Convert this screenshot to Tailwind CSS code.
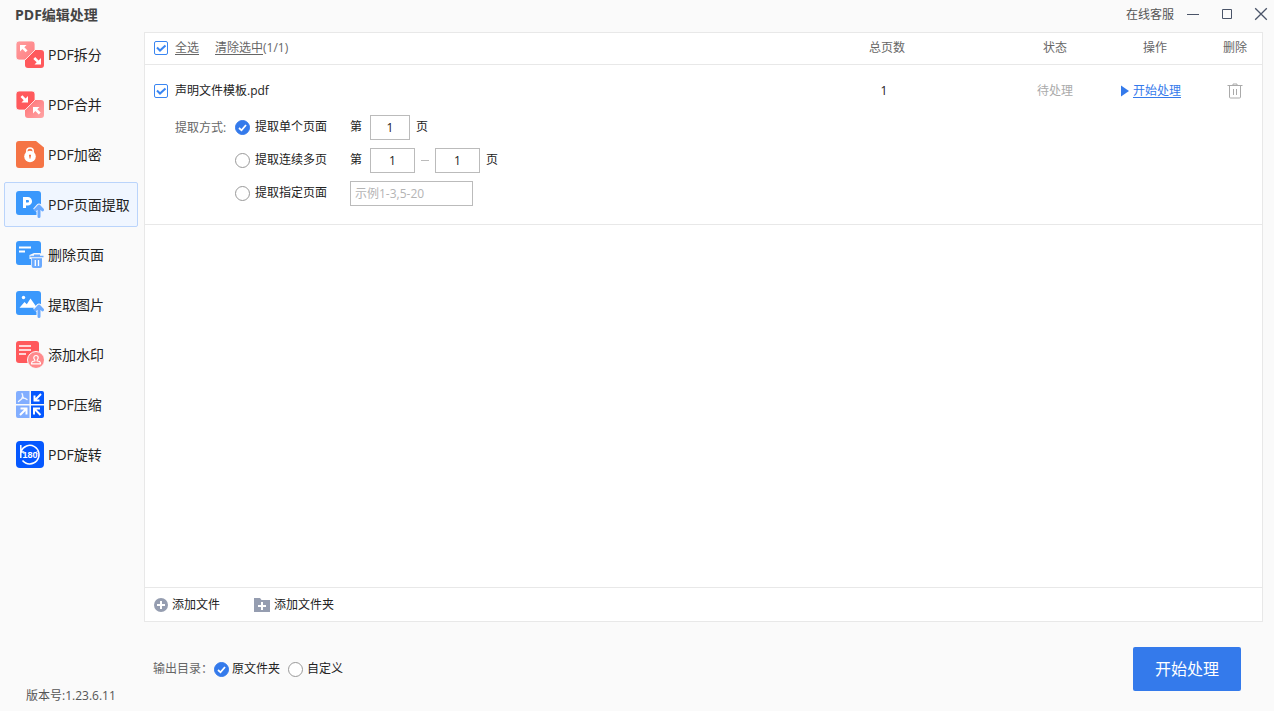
<!DOCTYPE html>
<html lang="zh-CN">
<head>
<meta charset="utf-8">
<title>PDF编辑处理</title>
<meta name="viewport" content="width=device-width, initial-scale=1">
<script src="https://cdn.jsdelivr.net/npm/@tailwindcss/browser@4"></script>
</head>
<body class="flex h-screen flex-col bg-[#fafafa] font-['Open_Sans','Noto_Sans_CJK_SC',sans-serif] text-xs text-[#333]">

<header class="flex h-8 shrink-0 items-start justify-between pt-1 pl-[15px] pr-1.5">
  <h1 class="text-sm leading-[22px] font-bold text-[#444]">PDF编辑处理</h1>
  <div class="flex h-5 items-center">
    <a href="#" class="mr-3 leading-5 pt-0.5 text-[#555]">在线客服</a>
    <button type="button" aria-label="最小化" class="mr-5"><svg class="size-3.5" viewBox="0 0 14 14" fill="none" stroke="#4a5468"><path d="M1 7.500h12"/></svg></button>
    <button type="button" aria-label="最大化" class="mr-5"><svg class="size-3.5" viewBox="0 0 14 14" fill="none" stroke="#4a5468"><path d="M2.500 2.500h9v9h-9z"/></svg></button>
    <button type="button" aria-label="关闭"><svg class="size-3.5" viewBox="0 0 14 14" fill="none" stroke="#4a5468" stroke-width="1.300"><path d="M1.200 1.200l11.600 11.600M12.800 1.200L1.200 12.800"/></svg></button>
  </div>
</header>

<div class="flex min-h-0 flex-1">
  <aside class="flex w-36 shrink-0 flex-col justify-between">
    <nav class="flex flex-col gap-[5px] pl-1 pr-1.5 text-sm text-[#222]">
      <a href="#" class="flex h-[45px] items-center gap-1 rounded-xs border border-transparent pl-[11px] whitespace-nowrap">
        <svg class="size-7 shrink-0" viewBox="0 0 28 28"><defs><linearGradient id="pale" x1="0" y1="0" x2="1" y2="1"><stop offset="0" stop-color="#ff9a9c"/><stop offset="1" stop-color="#ff8083"/></linearGradient></defs><path fill="#ff595c" d="M19 9h6a3 3 0 0 1 3 3v12a3 3 0 0 1-3 3H12a3 3 0 0 1-3-3v-5z"/><path fill="url(#pale)" stroke="#fafafa" stroke-width=".8" d="M3 0h13a3 3 0 0 1 3 3v6L9 19H3a3 3 0 0 1-3-3V3a3 3 0 0 1 3-3z"/><path fill="#fff" d="M4 4h6.500L8.300 6.200l3.200 3.200-1.900 1.900-3.200-3.200L4 10.500zM25 23.500h-6.500l2.200-2.200-3.400-3.400 1.900-1.900 3.400 3.400L25 17z"/></svg>
        PDF拆分</a>
      <a href="#" class="flex h-[45px] items-center gap-1 rounded-xs border border-transparent pl-[11px] whitespace-nowrap">
        <svg class="size-7 shrink-0" viewBox="0 0 28 28"><defs><linearGradient id="pale2" x1="0" y1="0" x2="1" y2="1"><stop offset="0" stop-color="#ff7073"/><stop offset="1" stop-color="#ffa5a6"/></linearGradient></defs><path fill="url(#pale2)" d="M19 9h6a3 3 0 0 1 3 3v12a3 3 0 0 1-3 3H12a3 3 0 0 1-3-3v-5z"/><path fill="#ff595c" stroke="#fafafa" stroke-width=".8" d="M3 0h13a3 3 0 0 1 3 3v6L9 19H3a3 3 0 0 1-3-3V3a3 3 0 0 1 3-3z"/><path fill="#fff" d="M12 11.500H5.500l2.200-2.200-3.200-3.200 1.900-1.900 3.200 3.200L12 5zM17 16h6.500l-2.200 2.200 3.400 3.400-1.900 1.900-3.400-3.400-2.400 2.400z"/></svg>
        PDF合并</a>
      <a href="#" class="flex h-[45px] items-center gap-1 rounded-xs border border-transparent pl-[11px] whitespace-nowrap">
        <svg class="size-7 shrink-0" viewBox="0 0 28 28"><path fill="#f57445" d="M3 0h17l8 6.500V24a3 3 0 0 1-3 3H3a3 3 0 0 1-3-3V3a3 3 0 0 1 3-3z"/><circle cx="14" cy="15.500" r="5.800" fill="#fff"/><path d="M10.800 12V9.800a3.200 2.800 0 0 1 6.400 0V12" fill="none" stroke="#fff" stroke-width="1.500"/><path fill="#f57445" d="M13 13.800h2v1.800h-.4v2h-1.200v-2H13z"/></svg>
        PDF加密</a>
      <a href="#" aria-current="page" class="flex h-[45px] items-center gap-1 rounded-xs border border-[#bad4fb] bg-[#f0f6ff] pl-[11px] whitespace-nowrap">
        <svg class="size-7 shrink-0" viewBox="0 0 28 28"><path fill="#3a98fc" d="M3 0h19a3 3 0 0 1 3 3v21H3a3 3 0 0 1-3-3V3a3 3 0 0 1 3-3z"/><path fill="none" stroke="#fff" stroke-width="3" d="M8.500 17V7.500h3.300a2.700 2.700 0 0 1 0 5.500H8.500"/><path fill="none" stroke="#f0f6ff" stroke-width="5" stroke-linejoin="round" d="M23 27V15l-4 4.500M23 15l4 4.500"/><path fill="none" stroke="#6aaaff" stroke-width="3" stroke-linejoin="round" stroke-linecap="round" d="M23 25.500V15l-3.500 3.800M23 15l3.500 3.800"/></svg>
        PDF页面提取</a>
      <a href="#" class="flex h-[45px] items-center gap-1 rounded-xs border border-transparent pl-[11px] whitespace-nowrap">
        <svg class="size-7 shrink-0" viewBox="0 0 28 28"><path fill="#3a98fc" d="M3 0h19a3 3 0 0 1 3 3v21H3a3 3 0 0 1-3-3V3a3 3 0 0 1 3-3z"/><path stroke="#fff" stroke-width="1.800" d="M3 6.500h12M3 10.500h6"/><path fill="#fafafa" d="M13.500 14l4.500-2h6l4 2v4h-1v10H15V18h-1.500z"/><path fill="#6aaaff" d="M14.300 14.700H18v-1.200h6v1.200h3.500v1.600H14.300zM15.700 17.200H26V25a2 2 0 0 1-2 2h-6.300a2 2 0 0 1-2-2z"/><path stroke="#fff" stroke-width="1.300" d="M19.300 19v6M22.500 19v6"/></svg>
        删除页面</a>
      <a href="#" class="flex h-[45px] items-center gap-1 rounded-xs border border-transparent pl-[11px] whitespace-nowrap">
        <svg class="size-7 shrink-0" viewBox="0 0 28 28"><path fill="#3a98fc" d="M3 0h19a3 3 0 0 1 3 3v21H3a3 3 0 0 1-3-3V3a3 3 0 0 1 3-3z"/><circle cx="7.500" cy="6.500" r="1.700" fill="#fff"/><path fill="#fff" d="M3.500 16.700l5-5.700 2.300 2.300L14.500 7.500l6.500 9.200z"/><path fill="none" stroke="#fafafa" stroke-width="5" stroke-linejoin="round" d="M23 27V15l-4 4.500M23 15l4 4.500"/><path fill="none" stroke="#6aaaff" stroke-width="3" stroke-linejoin="round" stroke-linecap="round" d="M23 25.500V15l-3.500 3.800M23 15l3.500 3.800"/></svg>
        提取图片</a>
      <a href="#" class="flex h-[45px] items-center gap-1 rounded-xs border border-transparent pl-[11px] whitespace-nowrap">
        <svg class="size-7 shrink-0" viewBox="0 0 28 28"><path fill="#ff595c" d="M3 0h17a3 3 0 0 1 3 3v19H3a3 3 0 0 1-3-3V3a3 3 0 0 1 3-3z"/><path stroke="#fff" stroke-width="1.500" d="M3 5h12M3 9h12M3 13h7"/><circle cx="20" cy="19" r="8.500" fill="#ff8a8c" stroke="#fafafa"/><path fill="none" stroke="#fff" stroke-width="1.200" stroke-linejoin="round" d="M18.900 20c.2-1.500-1.100-1.800-1.100-3.300a2.200 2.200 0 0 1 4.400 0c0 1.500-1.300 1.800-1.100 3.300 1.500 0 3.400.2 3.400 2.800h-9c0-2.600 1.900-2.800 3.400-2.800z"/></svg>
        添加水印</a>
      <a href="#" class="flex h-[45px] items-center gap-1 rounded-xs border border-transparent pl-[11px] whitespace-nowrap">
        <svg class="size-7 shrink-0" viewBox="0 0 28 28"><path fill="#82aeff" d="M2 0h11.500v13H0V2a2 2 0 0 1 2-2zM0 14.500h13.500V27H2a2 2 0 0 1-2-2z"/><path fill="#0558ff" d="M15 0h11a2 2 0 0 1 2 2v11H15zM15 14.500h13V25a2 2 0 0 1-2 2H15z"/><path fill="none" stroke="#f2f6ff" stroke-width="1.300" stroke-linecap="round" d="M6 2.500c1.200 2.200.8 3.800-.2 5.200L2.500 10.500M5.800 7.200c2-.2 3.800.2 5.200 1.300M6.800 5.500l1 1.700"/><path fill="none" stroke="#fff" stroke-width="2" d="M18.500 4.500v5h5M18.500 9.500l6.500-6.500M4.500 17.500h6v6M10.500 17.500L4 24M24 17.500h-6v6M18 17.500l6.500 6.500"/></svg>
        PDF压缩</a>
      <a href="#" class="flex h-[45px] items-center gap-1 rounded-xs border border-transparent pl-[11px] whitespace-nowrap">
        <svg class="size-7 shrink-0" viewBox="0 0 28 28"><rect width="28" height="27" rx="4" fill="#0558ff"/><path fill="none" stroke="#fff" stroke-width="1.500" d="M4.800 4v7h3.500M5 10.500A9.300 9.300 0 1 1 6.500 19.500M4.800 11v6"/><text x="6.500" y="17" fill="#fff" font-size="9" font-weight="bold" font-family="Liberation Sans Narrow, Liberation Sans, sans-serif">180</text><circle cx="21.500" cy="11.300" r="1" fill="none" stroke="#fff" stroke-width=".7"/></svg>
        PDF旋转</a>
    </nav>
    <p class="pb-[5px] pl-[26px] leading-5 text-[#555]">版本号:1.23.6.11</p>
  </aside>

  <main class="mr-[11px] flex min-w-0 flex-1 flex-col">
    <section class="flex min-h-0 flex-1 flex-col border border-[#e8e8e8] bg-white">
      <table class="w-full table-fixed border-collapse">
        <colgroup><col><col class="w-[242px]"><col class="w-[94px]"><col class="w-[106px]"><col class="w-[54px]"></colgroup>
        <thead class="text-[#666]">
          <tr class="h-[31px] border-b border-[#e8e8e8]">
            <th class="p-0 pl-[9px] text-left font-normal">
              <div class="flex items-center">
                <label class="flex items-center gap-[7px] underline underline-offset-2">
                  <span class="grid"><input type="checkbox" checked class="peer col-start-1 row-start-1 size-3.5 appearance-none rounded-xs border border-[#3a86f2] bg-white"><svg class="pointer-events-none col-start-1 row-start-1 hidden size-3.5 peer-checked:block" viewBox="0 0 14 14" fill="none" stroke="#3a86f2" stroke-width="2"><path d="M3 6.500l3 3 5.500-5"/></svg></span>
                  全选</label>
                <button type="button" class="ml-4 underline underline-offset-2">清除选中</button><span>(1/1)</span>
              </div>
            </th>
            <th class="p-0 font-normal">总页数</th>
            <th class="p-0 font-normal">状态</th>
            <th class="p-0 font-normal">操作</th>
            <th class="p-0 font-normal">删除</th>
          </tr>
        </thead>
        <tbody>
          <tr class="border-b border-[#e8e8e8] align-top leading-5">
            <td class="p-0 pt-4 pb-[18px] pl-[9px] whitespace-nowrap text-[#222]">
              <label class="flex items-center gap-[7px]">
                <span class="grid"><input type="checkbox" checked class="peer col-start-1 row-start-1 size-3.5 appearance-none rounded-xs border border-[#3a86f2] bg-white"><svg class="pointer-events-none col-start-1 row-start-1 hidden size-3.5 peer-checked:block" viewBox="0 0 14 14" fill="none" stroke="#3a86f2" stroke-width="2"><path d="M3 6.500l3 3 5.500-5"/></svg></span>
                声明文件模板.pdf</label>
              <div role="radiogroup" aria-labelledby="mode-label" class="mt-3.5 grid grid-cols-[60px_115px_auto] gap-y-2 pl-[21px]">
                <span id="mode-label" class="row-span-3 leading-[25px] text-[#666]">提取方式:</span>

                <label class="flex h-[25px] items-center gap-[5px]">
                  <span class="grid"><input type="radio" name="mode" checked class="peer col-start-1 row-start-1 size-[15px] appearance-none rounded-full border border-[#999] bg-white checked:border-[#347aeb] checked:bg-[#347aeb]"><svg class="pointer-events-none col-start-1 row-start-1 hidden size-[15px] peer-checked:block" viewBox="0 0 15 15" fill="none" stroke="#fff" stroke-width="1.800"><path d="M4 8l2.500 2.300L11 5"/></svg></span>
                  提取单个页面</label>
                <div class="flex items-center">
                  <span class="w-5">第</span>
                  <input type="text" value="1" aria-label="页码" class="mr-1.5 h-[25px] w-10 border border-[#bbb] bg-white text-center">
                  <span>页</span>
                </div>

                <label class="flex h-[25px] items-center gap-[5px]">
                  <span class="grid"><input type="radio" name="mode" class="peer col-start-1 row-start-1 size-[15px] appearance-none rounded-full border border-[#999] bg-white checked:border-[#347aeb] checked:bg-[#347aeb]"><svg class="pointer-events-none col-start-1 row-start-1 hidden size-[15px] peer-checked:block" viewBox="0 0 15 15" fill="none" stroke="#fff" stroke-width="1.800"><path d="M4 8l2.500 2.300L11 5"/></svg></span>
                  提取连续多页</label>
                <div class="flex items-center">
                  <span class="w-5">第</span>
                  <input type="text" value="1" aria-label="起始页" class="h-[25px] w-[45px] border border-[#bbb] bg-white text-center">
                  <span class="mx-1.5 h-px w-2 bg-[#bbb]"></span>
                  <input type="text" value="1" aria-label="结束页" class="mr-1.5 h-[25px] w-[45px] border border-[#bbb] bg-white text-center">
                  <span>页</span>
                </div>

                <label class="flex h-[25px] items-center gap-[5px]">
                  <span class="grid"><input type="radio" name="mode" class="peer col-start-1 row-start-1 size-[15px] appearance-none rounded-full border border-[#999] bg-white checked:border-[#347aeb] checked:bg-[#347aeb]"><svg class="pointer-events-none col-start-1 row-start-1 hidden size-[15px] peer-checked:block" viewBox="0 0 15 15" fill="none" stroke="#fff" stroke-width="1.800"><path d="M4 8l2.500 2.300L11 5"/></svg></span>
                  提取指定页面</label>
                <input type="text" placeholder="示例1-3,5-20" aria-label="指定页面" class="h-[25px] w-[123px] border border-[#bbb] bg-white px-1 placeholder:text-[#b4b4b4]">
              </div>
            </td>
            <td class="p-0 pt-4 pr-1.5 text-center text-[#222]">1</td>
            <td class="p-0 pt-4 text-center text-[#aaa]">待处理</td>
            <td class="p-0 pt-4 pr-2">
              <a href="#" class="flex items-center justify-center gap-1 text-[#347aeb] underline underline-offset-2">
                <svg class="h-3 w-2" viewBox="0 0 8 12" fill="#347aeb"><path d="M0 .5L8 6l-8 5.500z"/></svg>开始处理</a>
            </td>
            <td class="p-0 pt-4">
              <button type="button" aria-label="删除" class="mx-auto flex h-5 items-center">
                <svg class="size-4" viewBox="0 0 16 16" fill="none" stroke="#aaa"><path d="M.5 2.500h15M6 2.500v-1.500h4v1.500M2.500 2.500v11.500q0 1 1 1h9q1 0 1-1V2.500M6.500 6v6M9.500 6v6"/></svg>
              </button>
            </td>
          </tr>
        </tbody>
      </table>

      <footer class="mt-auto flex h-[34px] shrink-0 items-center border-t border-[#e8e8e8] pl-[9px] text-[#222]">
        <button type="button" class="mr-[34px] flex items-center gap-1">
          <svg class="size-3.5" viewBox="0 0 14 14"><circle cx="7" cy="7" r="7" fill="#959db0"/><path d="M3 7h8M7 3v8" stroke="#fff" stroke-width="2"/></svg>添加文件</button>
        <button type="button" class="flex items-center gap-1">
          <svg class="h-3.5 w-4" viewBox="0 0 16 14"><path fill="#959db0" d="M0 0h6l1.500 2H16v12H0z"/><path d="M4 8h8M8 4v8" stroke="#fff" stroke-width="2"/></svg>添加文件夹</button>
      </footer>
    </section>

    <div class="flex h-[89px] shrink-0 items-center justify-between pr-[22px] pl-[9px] pt-[5px]">
      <div role="radiogroup" aria-labelledby="out-label" class="flex items-center text-[#222]">
        <span id="out-label" class="w-[61px] whitespace-nowrap text-[#666]">输出目录：</span>
        <label class="mr-2 flex items-center gap-[3px]">
          <span class="grid"><input type="radio" name="out" checked class="peer col-start-1 row-start-1 size-[15px] appearance-none rounded-full border border-[#999] bg-white checked:border-[#347aeb] checked:bg-[#347aeb]"><svg class="pointer-events-none col-start-1 row-start-1 hidden size-[15px] peer-checked:block" viewBox="0 0 15 15" fill="none" stroke="#fff" stroke-width="1.800"><path d="M4 8l2.500 2.300L11 5"/></svg></span>
          原文件夹</label>
        <label class="flex items-center gap-1">
          <span class="grid"><input type="radio" name="out" class="peer col-start-1 row-start-1 size-[15px] appearance-none rounded-full border border-[#999] bg-white checked:border-[#347aeb] checked:bg-[#347aeb]"><svg class="pointer-events-none col-start-1 row-start-1 hidden size-[15px] peer-checked:block" viewBox="0 0 15 15" fill="none" stroke="#fff" stroke-width="1.800"><path d="M4 8l2.500 2.300L11 5"/></svg></span>
          自定义</label>
      </div>
      <button type="button" class="h-11 w-[108px] rounded-xs bg-[#347aeb] text-base text-white">开始处理</button>
    </div>
  </main>
</div>
</body>
</html>
